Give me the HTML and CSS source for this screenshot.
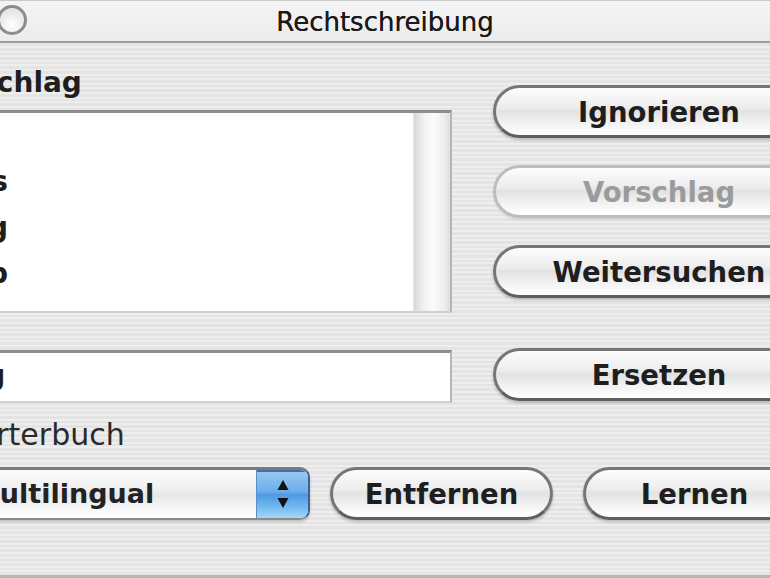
FILE: index.html
```html
<!DOCTYPE html>
<html lang="de">
<head>
    <meta charset="UTF-8">
    <meta name="viewport" content="width=device-width, initial-scale=1.0">
    <title>Rechtschreibung</title>
    <link rel="stylesheet" href="styles.css">
</head>
<body>
    <div class="window">
        <div class="titlebar">
            <span class="close-btn"></span>
            <h1 class="window-title">Rechtschreibung</h1>
        </div>
        <div class="panel">
            <div class="panel-main">
                <div class="left-col">
                    <label class="field-label label-strong" for="guess">Vorschlag</label>
                    <div class="suggest-box">
                        <ul class="suggest-list" id="guess">
                            <li>Vor</li>
                            <li>Vorschlags</li>
                            <li>Vorschlag</li>
                            <li>Vorschub</li>
                        </ul>
                        <div class="scroll-track"></div>
                    </div>
                    <div class="word-field"><span class="word-text">Zug</span></div>
                    <div class="field-label dict-label">Wörterbuch</div>
                </div>
                <div class="right-col">
                    <button class="aqua-btn">Ignorieren</button>
                    <button class="aqua-btn" disabled>Vorschlag</button>
                    <button class="aqua-btn">Weitersuchen</button>
                    <button class="aqua-btn btn-replace">Ersetzen</button>
                </div>
            </div>
            <div class="bottom-row">
                <div class="popup">
                    <span class="popup-text">Multilingual</span>
                    <span class="popup-arrows">
                        <svg width="14" height="30" viewBox="0 0 14 30">
                            <path d="M7 1 L12.5 11 L1.5 11 Z" fill="#111"/>
                            <path d="M7 29 L12.5 19 L1.5 19 Z" fill="#111"/>
                        </svg>
                    </span>
                </div>
                <button class="aqua-btn btn-small">Entfernen</button>
                <button class="aqua-btn btn-small btn-learn">Lernen</button>
            </div>
        </div>
    </div>
</body>
</html>
```

FILE: styles.css
```css
* {
    margin: 0;
    padding: 0;
    box-sizing: border-box;
}
body {
    width: 770px;
    height: 578px;
    overflow: hidden;
    font-family: "DejaVu Sans", Verdana, sans-serif;
    color: #1e1e1e;
    background: #ebebeb;
}
.window {
    height: 578px;
    background: repeating-linear-gradient(180deg, #eeeeee 0px, #eeeeee 2px, #e4e4e4 2px, #e4e4e4 4.6px);
    border-bottom: 3px solid #b5b5b5;
}
.titlebar {
    position: relative;
    height: 43px;
    border-top: 1px solid #c9c9c9;
    border-bottom: 2px solid #9d9d9d;
    background: linear-gradient(180deg, #f4f4f4 0%, #ececec 100%);
    display: flex;
    justify-content: center;
    align-items: center;
}
.close-btn {
    position: absolute;
    left: -3px;
    top: 4px;
    width: 30px;
    height: 30px;
    border-radius: 50%;
    border: 3px solid #8b8b8b;
    background: radial-gradient(circle at 50% 70%, #ffffff 0%, #e6e6e6 70%);
}
.window-title {
    font-size: 26px;
    font-weight: normal;
    color: #1a1a1a;
    margin-top: 2px;
    text-shadow: 0 0 0.6px #1a1a1a;
}
.panel {
    margin-left: -80px;
}
.panel-main {
    display: flex;
}
.left-col {
    width: 532px;
    flex-shrink: 0;
    display: flex;
    flex-direction: column;
}
.field-label {
    display: block;
    font-size: 28px;
    line-height: 34px;
}
.label-strong {
    font-weight: bold;
    margin-top: 23px;
    padding-left: 7px;
}
.suggest-box {
    margin-top: 10px;
    height: 203px;
    display: flex;
    background: #fff;
    border-top: 3px solid #8e8e8e;
    border-left: 2px solid #b6b6b6;
    border-right: 2px solid #b6b6b6;
    border-bottom: 2px solid #cfcfcf;
}
.suggest-list {
    list-style: none;
    width: 86px;
    overflow: hidden;
    font-size: 28px;
    font-weight: bold;
    line-height: 46px;
    white-space: nowrap;
}
.suggest-list li {
    display: flex;
    justify-content: flex-end;
}
.suggest-list li:first-child {
    padding-right: 30px;
}
.scroll-track {
    margin-left: auto;
    width: 37px;
    border-left: 1px solid #e4e4e4;
    background: linear-gradient(90deg, #d9d9d9 0%, #f3f3f3 30%, #fbfbfb 55%, #ececec 85%, #dedede 100%);
}
.word-field {
    margin-top: 37px;
    height: 53px;
    background: #fff;
    border-top: 3px solid #8e8e8e;
    border-left: 2px solid #b6b6b6;
    border-right: 2px solid #b6b6b6;
    border-bottom: 2px solid #d2d2d2;
    font-size: 28px;
    font-weight: bold;
    line-height: 46px;
    padding-left: 23px;
    white-space: nowrap;
}
.dict-label {
    margin-top: 15px;
    padding-left: 30px;
    font-size: 30px;
    color: #2a2a2a;
}
.right-col {
    margin-left: 41px;
    padding-top: 42px;
    flex-shrink: 0;
    display: flex;
    flex-direction: column;
    gap: 27px;
}
.aqua-btn {
    width: 332px;
    height: 53px;
    border-radius: 27px;
    border: 3px solid #767676;
    border-bottom-color: #5e5e5e;
    background: linear-gradient(180deg, #fdfdfd 0%, #ececec 42%, #e2e2e2 50%, #f1f1f1 72%, #ffffff 100%);
    box-shadow: 0 2px 3px rgba(0, 0, 0, 0.22);
    font-family: "DejaVu Sans", Verdana, sans-serif;
    font-size: 27.5px;
    font-weight: bold;
    color: #1e1e1e;
    flex-shrink: 0;
}
.aqua-btn:disabled {
    border-color: #bdbdbd;
    color: #9b9b9b;
    box-shadow: 0 2px 2px rgba(0, 0, 0, 0.08);
}
.btn-replace {
    margin-top: 23px;
}
.bottom-row {
    margin-top: 15px;
    display: flex;
}
.popup {
    margin-left: 35px;
    width: 355px;
    height: 53px;
    flex-shrink: 0;
    display: flex;
    border-radius: 10px;
    border: 2px solid #8a8a8a;
    border-top: 3px solid #7a7a7a;
    border-right-color: #3f5f96;
    background: linear-gradient(180deg, #fbfbfb 0%, #eeeeee 45%, #e6e6e6 52%, #f4f4f4 75%, #ffffff 100%);
    box-shadow: 0 2px 3px rgba(0, 0, 0, 0.2);
    overflow: hidden;
}
.popup-text {
    flex: 1;
    padding-left: 16px;
    font-size: 27px;
    font-weight: bold;
    line-height: 47px;
    color: #222;
}
.popup-arrows {
    width: 52px;
    display: flex;
    justify-content: center;
    align-items: center;
    border-left: 1px solid #5b8fcb;
    box-shadow: inset 0 2px 0 #4a6aa4;
    background: linear-gradient(180deg, #9ccaf1 0%, #6aaee9 45%, #4c9ae2 52%, #79bdf0 80%, #a6d6f7 100%);
}
.btn-small {
    width: 223px;
    margin-left: 20px;
}
.btn-learn {
    margin-left: 30px;
}
```
